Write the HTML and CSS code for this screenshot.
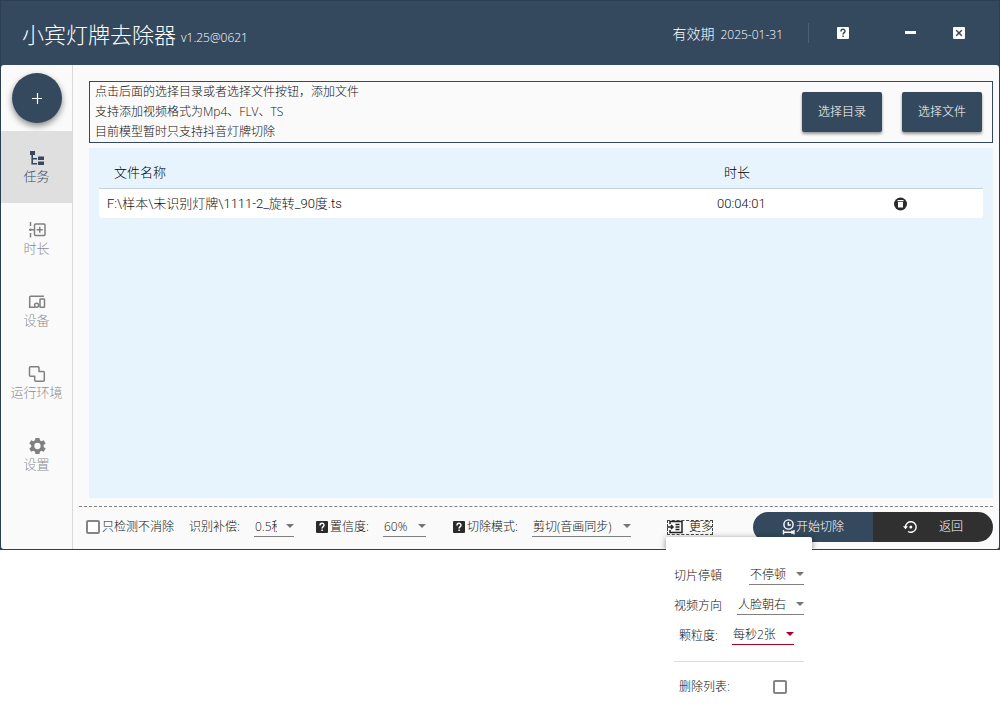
FILE: index.html
```html
<!DOCTYPE html>
<html lang="zh-CN">
<head>
<meta charset="utf-8">
<title>小宾灯牌去除器</title>
<link rel="stylesheet" href="styles.css">
</head>
<body>
<div class="window">
  <header class="titlebar">
    <h1 class="title">小宾灯牌去除器</h1>
    <span class="version">v1.25@0621</span>
    <div class="license"><span class="license-label">有效期</span><span class="license-date">2025-01-31</span></div>
    <div class="window-buttons">
      <button class="icon-button" type="button" aria-label="帮助">
        <svg width="12" height="12" viewBox="0 0 12 12"><rect width="12" height="12" rx="1" fill="#fff"/><path d="M4 4.5C4 1.6 8 1.7 8 4.2C8 5.6 6.1 5.7 6.1 7.4M6.1 8.6V10" fill="none" stroke="#34495e" stroke-width="1.5"/></svg>
      </button>
      <button class="icon-button" type="button" aria-label="最小化">
        <svg width="12" height="12" viewBox="0 0 12 12"><path d="M0 5.500H11" stroke="#fff" stroke-width="3"/></svg>
      </button>
      <button class="icon-button" type="button" aria-label="关闭">
        <svg width="12" height="12" viewBox="0 0 12 12"><rect width="12" height="12" rx="1" fill="#fff"/><path d="M3.2 3.2L8.8 8.8M8.8 3.2L3.2 8.8" stroke="#34495e" stroke-width="1.5"/></svg>
      </button>
    </div>
  </header>

  <div class="body">
    <nav class="sidebar">
      <button class="add-button" type="button" aria-label="添加">
        <svg width="12" height="12" viewBox="0 0 12 12"><path d="M1 6.5H11M6.5 1V12" stroke="#fff" stroke-width="1.2"/></svg>
      </button>
      <button class="nav-item active" type="button">
        <svg width="18" height="18" viewBox="0 0 18 18"><path d="M2 2h5v4H5v3h4v1.600H5V14h4v1.600H3.400V6H2zM10 7.500h6v3.500h-6zM10 12.500h6V16h-6z" fill="currentColor"/></svg>
        <span>任务</span>
      </button>
      <button class="nav-item" type="button">
        <svg width="18" height="18" viewBox="0 0 18 18" fill="none" stroke="currentColor" stroke-width="1.500"><rect x="6.500" y="3" width="10.500" height="11.500" rx="1"/><path d="M11.750 5.800v6M8.700 8.800h6M2.500 1v4M2.500 12v4.500M1 8.800h5M2.500 7.500v2.600"/></svg>
        <span>时长</span>
      </button>
      <button class="nav-item" type="button">
        <svg width="18" height="18" viewBox="0 0 18 18" fill="none" stroke="currentColor" stroke-width="1.500"><path d="M16 3.200H2.700Q1.700 3.200 1.700 4.200V14.300H7"/><circle cx="8.600" cy="12.300" r="2"/><rect x="12" y="6" width="4.500" height="8.300" rx=".5"/></svg>
        <span>设备</span>
      </button>
      <button class="nav-item" type="button">
        <svg width="18" height="18" viewBox="0 0 18 18" fill="none" stroke="currentColor" stroke-width="1.500" stroke-linejoin="round"><path d="M2.500 1.700h7.500q1 0 1 1V6.500h4.300q1 0 1 1v7.700q0 1-1 1H7.700q-1 0-1-1V11.300H2.500q-1 0-1-1V2.700q0-1 1-1z"/></svg>
        <span>运行环境</span>
      </button>
      <button class="nav-item" type="button">
        <svg width="18" height="18" viewBox="2 2 20 20"><path fill="currentColor" d="M19.400 13a7.500 7.500 0 0 0 0-2l2.200-1.700-2.100-3.600-2.600 1a8 8 0 0 0-1.700-1L14.800 3h-4.600l-.4 2.700a8 8 0 0 0-1.700 1l-2.600-1-2.100 3.600L5.600 11a7.500 7.500 0 0 0 0 2l-2.200 1.700 2.100 3.600 2.600-1a8 8 0 0 0 1.700 1l.4 2.700h4.600l.4-2.700a8 8 0 0 0 1.700-1l2.600 1 2.100-3.600zM12.500 15.500a3.500 3.500 0 1 1 0-7 3.500 3.500 0 0 1 0 7z"/></svg>
        <span>设置</span>
      </button>
    </nav>

    <main class="main">
      <section class="hint">
        <div class="hint-text">
          <p>点击后面的选择目录或者选择文件按钮，添加文件</p>
          <p>支持添加视频格式为Mp4、FLV、TS</p>
          <p>目前模型暂时只支持抖音灯牌切除</p>
        </div>
        <button class="raised" type="button">选择目录</button>
        <button class="raised" type="button">选择文件</button>
      </section>

      <section class="files">
        <table class="file-table">
          <thead>
            <tr><th class="col-name">文件名称</th><th class="col-time">时长</th><th class="col-action"></th></tr>
          </thead>
          <tbody>
            <tr>
              <td class="col-name">F:\样本\未识别灯牌\1111-2_旋转_90度.ts</td>
              <td class="col-time">00:04:01</td>
              <td class="col-action">
                <button class="icon-button" type="button" aria-label="删除">
                  <svg width="14" height="14" viewBox="0 0 14 14"><circle cx="6.500" cy="7" r="6.500" fill="#2b2b2b"/><path d="M3.500 3h6v1.300h-6zM4 5h5V10.500H4z" fill="#fff"/></svg>
                </button>
              </td>
            </tr>
          </tbody>
        </table>
      </section>

      <footer class="toolbar">
        <label class="check"><input type="checkbox"><span>只检测不消除</span></label>
        <div class="field field-offset">
          <label for="offset">识别补偿:</label>
          <span class="select"><select id="offset"><option>0.5秒</option></select></span>
        </div>
        <div class="field field-confidence">
          <svg width="12" height="12" viewBox="0 0 12 12"><rect width="12" height="12" rx="1" fill="#2b2b2b"/><path d="M4 4.500C4 1.600 8 1.700 8 4.200C8 5.600 6.100 5.700 6.100 7.400M6.100 8.600V10" fill="none" stroke="#fff" stroke-width="1.500"/></svg>
          <label for="confidence">置信度:</label>
          <span class="select"><select id="confidence"><option>60%</option></select></span>
        </div>
        <div class="field field-mode">
          <svg width="12" height="12" viewBox="0 0 12 12"><rect width="12" height="12" rx="1" fill="#2b2b2b"/><path d="M4 4.500C4 1.600 8 1.700 8 4.200C8 5.600 6.100 5.700 6.100 7.400M6.100 8.600V10" fill="none" stroke="#fff" stroke-width="1.500"/></svg>
          <label for="mode">切除模式:</label>
          <span class="select"><select id="mode"><option>剪切(音画同步)</option></select></span>
        </div>
        <div class="more">
          <button class="more-button" type="button" aria-expanded="true">
            <svg width="16" height="14" viewBox="0 0 16 14" fill="none" stroke="#222" stroke-width="1.500"><path d="M3 4V1.500H15V12.500H3V10M0 7H6M4 5L6 7L4 9M8.500 4.500h4M8.500 7h4M8.500 9.500h4"/></svg>
            <span>更多</span>
          </button>
          <div class="popup">
            <div class="popup-row">
              <label for="pause">切片停頓</label>
              <span class="select pause"><select id="pause"><option>不停顿</option></select></span>
            </div>
            <div class="popup-row">
              <label for="direction">视频方向</label>
              <span class="select direction"><select id="direction"><option>人脸朝右</option></select></span>
            </div>
            <div class="popup-row inset">
              <label for="grain">颗粒度:</label>
              <span class="select grain"><select id="grain"><option>每秒2张</option></select></span>
            </div>
            <hr class="divider">
            <div class="popup-row clear-row">
              <label for="clear">删除列表:</label>
              <input id="clear" type="checkbox">
            </div>
          </div>
        </div>
        <div class="actions">
          <button class="action start" type="button">
            <svg width="14" height="16" viewBox="0 0 14 16" fill="none" stroke="#fff" stroke-width="1.400"><circle cx="6.500" cy="5.500" r="4.600"/><path d="M6.300 3v3h2.500M1.500 11v4.500M12 11v4.500M2 13.300h9.500M9.500 11.800l2 1.500-2 1.500"/></svg>
            <span>开始切除</span>
          </button>
          <button class="action back" type="button">
            <svg width="14" height="14" viewBox="0 0 14 14"><path d="M2.500 7A5.300 5.300 0 1 1 5 11.500" fill="none" stroke="#fff" stroke-width="1.400"/><path d="M0 6.300h5L2.500 9.300z" fill="#fff"/><circle cx="7.800" cy="7" r="1.500" fill="#fff"/></svg>
            <span>返回</span>
          </button>
        </div>
      </footer>
    </main>
  </div>
</div>
</body>
</html>
```

FILE: styles.css
```css
* {
  box-sizing: border-box;
}

html,
body {
  min-height: 100vh;
}

body {
  margin: 0;
  background: #fff;
  color: #111;
  font: 300 12px/20px "Open Sans", "Noto Sans CJK SC", sans-serif;
}

button,
select {
  margin: 0;
  padding: 0;
  border: 0;
  background: none;
  color: inherit;
  font: inherit;
}

svg {
  display: block;
  flex: none;
}

.window {
  border: 1px solid #2c3e50;
  background: #34495e;
}

/* Title bar */
.titlebar {
  display: flex;
  align-items: center;
  height: 64px;
  padding: 0 34px 0 21px;
  color: #fff;
}

.title {
  margin: 0;
  padding-top: 2px;
  font-size: 22px;
  line-height: 32px;
  font-weight: 300;
}

.version {
  margin: 10px 0 0 5px;
}

.license {
  display: flex;
  align-items: center;
  gap: 6px;
  height: 20px;
  margin-left: auto;
  padding-right: 25px;
  border-right: 1px solid #4d6075;
}

.license-label {
  padding-top: 2px;
  font-size: 14px;
}

.license-date {
  padding-top: 3px;
}

.window-buttons {
  display: flex;
  margin-left: 28px;
  gap: 36px;
}

.window-buttons .icon-button:first-child {
  margin-right: 20px;
}

.body {
  display: flex;
  border-radius: 3px;
  background: #fafafa;
}

/* Sidebar */
.sidebar {
  display: flex;
  flex: none;
  flex-direction: column;
  width: 72px;
  border-right: 1px solid #dadada;
}

.add-button {
  display: flex;
  align-items: center;
  justify-content: center;
  width: 50px;
  height: 50px;
  margin: 8px 0 8px 11px;
  border-radius: 50%;
  background: #34495e;
  box-shadow: 0 3px 6px rgba(0, 0, 0, 0.45);
}

.nav-item {
  display: flex;
  flex-direction: column;
  align-items: center;
  height: 72px;
  padding-top: 18px;
  color: #808080;
  font-size: 13px;
  line-height: 18px;
}

.nav-item span {
  color: #8c8c8c;
}

.nav-item.active {
  background: #dfdfdf;
  color: #34495e;
}

.nav-item.active span {
  color: #34495e;
}

/* Main column */
.main {
  flex: 1;
  min-width: 0;
  padding: 16px 6px 0;
}

.hint {
  display: flex;
  align-items: center;
  gap: 20px;
  margin-left: 10px;
  padding: 0 10px 0 5px;
  border: 1px solid #34495e;
}

.hint-text {
  flex: 1;
}

.hint p {
  margin: 0;
}

.raised {
  width: 80px;
  height: 40px;
  border-radius: 2px;
  background: #34495e;
  box-shadow: 0 2px 3px rgba(0, 0, 0, 0.4);
  color: #fff;
}

.files {
  min-height: 350px;
  margin: 5px 0 0 10px;
  padding: 9px 10px;
  background: #e7f4fe;
}

.file-table {
  width: 100%;
  border-spacing: 0;
  table-layout: fixed;
  font-family: Roboto, "Noto Sans CJK SC", sans-serif;
  font-size: 13px;
}

.file-table th {
  height: 32px;
  padding: 0 0 0 15px;
  border-bottom: 1px solid #c2d3e0;
  color: #000;
  font-weight: 300;
  text-align: left;
}

.file-table td {
  height: 29px;
  padding: 0 0 0 8px;
  background: #fff;
}

.file-table td:first-child {
  border-radius: 0 0 0 3px;
}

.file-table td:last-child {
  border-radius: 0 0 3px 0;
}

.file-table .col-time {
  width: 180px;
}

.file-table .col-action {
  width: 94px;
  padding-left: 5px;
}

.file-table .icon-button {
  display: block;
}

/* Bottom toolbar */
.toolbar {
  display: flex;
  align-items: center;
  height: 43px;
  margin-top: 8px;
  padding: 0 0 2px 7px;
  border-top: 1px dashed #808080;
}

.check,
.field {
  display: flex;
  align-items: center;
  gap: 2px;
  white-space: nowrap;
}

input[type="checkbox"] {
  flex: none;
  width: 14px;
  height: 14px;
  margin: 0;
  appearance: none;
  border: 2px solid #858585;
  border-radius: 2px;
  background: #fff;
}

.field-offset {
  width: 105px;
  margin-left: 15px;
}

.field-confidence {
  width: 110px;
  margin-left: 22px;
}

.field-mode {
  width: 178px;
  margin-left: 27px;
}

.select {
  position: relative;
  display: block;
  width: 40px;
  margin-left: auto;
  border-bottom: 1px solid #808080;
}

.select::after {
  position: absolute;
  top: 6px;
  right: 0;
  border: 4px solid transparent;
  border-top-color: #757575;
  border-bottom: 0;
  content: "";
  pointer-events: none;
}

.select select {
  display: block;
  width: 100%;
  height: 18px;
  padding: 0 17px 0 1px;
  appearance: none;
  line-height: 18px;
}

.field-confidence .select {
  width: 43px;
}

.field-mode .select {
  width: 99px;
}

.more {
  position: relative;
  margin-left: 36px;
}

.more-button {
  display: flex;
  align-items: center;
  gap: 6px;
  height: 15px;
  outline: 1px dashed #444;
  outline-offset: -1px;
  color: #000;
}

/* Menu opened from the "more" button */
.popup {
  position: absolute;
  z-index: 1;
  top: 17px;
  left: -1px;
  width: 146px;
  padding: 24px 8px 20px;
  border-radius: 2px 2px 0 0;
  background: #fff;
}

.popup::before {
  position: absolute;
  z-index: -1;
  inset: 0;
  box-shadow: 0 1px 6px rgba(0, 0, 0, 0.45);
  clip-path: inset(-8px -8px calc(100% - 12px) -8px);
  content: "";
}

.popup-row {
  display: flex;
  align-items: center;
  height: 30px;
  white-space: nowrap;
}

.popup-row.inset {
  padding: 0 10px 0 5px;
}

.pause {
  width: 55px;
}

.direction {
  width: 67px;
}

.grain {
  width: 62px;
  border-bottom-color: #b00020;
}

.grain::after {
  border-top-color: #b00020;
}

.divider {
  height: 1px;
  margin: 10px 0;
  border: 0;
  background: #dcdcdc;
}

.clear-row {
  justify-content: space-between;
  padding: 0 17px 0 5px;
}

.actions {
  display: flex;
  margin-left: auto;
  overflow: hidden;
  border-radius: 15px;
}

.action {
  display: flex;
  align-items: center;
  justify-content: center;
  width: 120px;
  height: 30px;
  color: #fff;
}

.start {
  background: #34495e;
}

.back {
  gap: 22px;
  background: #303030;
}
```
